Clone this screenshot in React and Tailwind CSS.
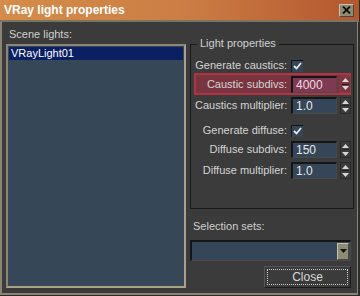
import React from "react";

const font = { fontFamily: '"Liberation Sans", Arial, sans-serif' };

function Spinner({ red }) {
  return (
    <div className={`ml-[3px] flex h-[17px] w-[11px] flex-col border ${red ? "border-[#8a3a44] bg-[#7a3440]" : "border-[#2a2a2a] bg-[#3b3b3b]"}`}>
      <div className="flex flex-1 items-center justify-center">
        <svg width="7" height="4" viewBox="0 0 7 4"><path d="M3.5 0 L7 4 L0 4 Z" fill="#d8d8d8" /></svg>
      </div>
      <div className="mx-[1px] h-px bg-[#222]" />
      <div className="flex flex-1 items-center justify-center">
        <svg width="7" height="4" viewBox="0 0 7 4"><path d="M0 0 L7 0 L3.5 4 Z" fill="#d8d8d8" /></svg>
      </div>
    </div>
  );
}

function NumRow({ label, value, red, mt, lw = "w-[96px]" }) {
  return (
    <div className={`flex h-[17px] items-center ${mt || ""}`}>
      <div className={`${lw} whitespace-nowrap pr-[4px] text-right text-[11px] leading-none text-[#d4d4d4]`}>{label}</div>
      <div className={`flex h-[17px] w-[46px] items-center border-t-2 border-l-2 border-b border-r border-t-[#151515] border-l-[#151515] border-b-[#4a4a4a] border-r-[#4a4a4a] pl-[3px] text-[12px] leading-none ${red ? "bg-[#7d3a52] text-[#f0d8e0]" : "bg-[#344658] text-[#e8e8e8]"}`}>
        {value}
      </div>
      <Spinner red={red} />
    </div>
  );
}

function CheckRow({ label, mt }) {
  return (
    <div className={`flex h-[13px] items-center ${mt || ""}`}>
      <div className="w-[96px] whitespace-nowrap pr-[4px] text-right text-[11px] leading-none text-[#d4d4d4]">{label}</div>
      <div className="flex h-[12px] w-[12px] items-center justify-center border-t border-l border-t-[#151515] border-l-[#151515] bg-[#344658]">
        <svg width="9" height="8" viewBox="0 0 9 8"><path d="M1 4 L3.5 6.5 L8 1" stroke="#e8e8e8" strokeWidth="1.8" fill="none" /></svg>
      </div>
    </div>
  );
}

export default function App() {
  return (
    <div className="h-[296px] w-[360px] overflow-hidden bg-[#2c2c2a]" style={font}>
      <div className="flex h-[295px] w-[358px] flex-col border-l-2 border-r border-b-2 border-l-[#8a8470] border-r-[#8a8470] border-b-[#8a8470] bg-[#3b3b3b]">
        {/* title bar */}
        <div className="-ml-[2px] flex h-[20px] w-[359px] items-center justify-between bg-gradient-to-r from-[#d48c48] via-[#cc7e45] to-[#b4572f] pl-[4px] pr-[5px]">
          <span className="text-[12px] font-bold leading-none text-white">VRay light properties</span>
          <div className="flex h-[13px] w-[15px] items-center justify-center border border-t-[#c8c0a8] border-l-[#c8c0a8] border-b-[#4a4638] border-r-[#4a4638] bg-[#8f8a72]">
            <svg width="9" height="8" viewBox="0 0 9 8"><path d="M1 0.5 L8 7.5 M8 0.5 L1 7.5" stroke="#111" strokeWidth="1.8" /></svg>
          </div>
        </div>
        <div className="-ml-[2px] h-[2px] w-[359px] bg-[#7a7562]" />
        <div className="flex flex-1 pl-[4px] pr-[3px]">
          {/* left column */}
          <div className="flex w-[180px] flex-col">
            <div className="mt-[7px] pl-[3px] text-[11px] leading-none text-[#d0d0d0]">Scene lights:</div>
            <div className="mt-[4px] h-[244px] w-[180px] border-2 border-t-[#8a8470] border-l-[#8a8470] border-b-[#aaa288] border-r-[#aaa288] bg-[#364858]">
              <div className="mx-[1px] mt-[1px] flex h-[13px] items-center bg-[#0a2062] pl-[2px] text-[11px] leading-none text-white">VRayLight01</div>
            </div>
          </div>
          {/* right column */}
          <div className="ml-[4px] flex flex-1 flex-col">
            <div className="relative mt-[22px] h-[165px] w-[164px] border border-[#1a1a1a]">
              <div className="absolute -top-[7px] left-[6px] bg-[#3b3b3b] px-[3px] text-[11px] leading-none text-[#d0d0d0]">Light properties</div>
              <div className="flex flex-col pl-[4px] pt-[14px]">
                <CheckRow label="Generate caustics:" />
                <div className="mt-[1px] -ml-[1px] flex h-[22px] w-[157px] items-center border-2 border-[#b03444] bg-[#7a3440]">
                  <NumRow label="Caustic subdivs:" value="4000" red lw="w-[95px]" />
                </div>
                <NumRow label="Caustics multiplier:" value="1.0" mt="mt-[2px]" />
                <CheckRow label="Generate diffuse:" mt="mt-[10px]" />
                <NumRow label="Diffuse subdivs:" value="150" mt="mt-[4px]" />
                <NumRow label="Diffuse multiplier:" value="1.0" mt="mt-[4px]" />
              </div>
            </div>
            <div className="mt-[12px] pl-[3px] text-[11px] leading-none text-[#d0d0d0]">Selection sets:</div>
            <div className="mt-[8px] flex h-[21px] w-[161px] items-center justify-end border-t-2 border-l-2 border-t-[#151515] border-l-[#151515] border-b border-r border-b-[#4a4a4a] border-r-[#4a4a4a] bg-[#344658] pr-[1px]">
              <div className="flex h-[17px] w-[12px] items-center justify-center border border-t-[#c8c0a8] border-l-[#c8c0a8] border-b-[#4a4638] border-r-[#4a4638] bg-[#8f8a72]">
                <svg width="7" height="4" viewBox="0 0 7 4"><path d="M0 0 L7 0 L3.5 4 Z" fill="#111" /></svg>
              </div>
            </div>
            <div className="mt-[5px] ml-[74px] flex h-[22px] w-[87px] items-center justify-center border border-t-[#555] border-l-[#555] border-b-[#1a1a1a] border-r-[#1a1a1a] p-[2px]">
              <div className="flex h-full w-full items-center justify-center border border-dotted border-[#d0d0d0] text-[12px] leading-none text-[#d8d8d8]">Close</div>
            </div>
          </div>
        </div>
      </div>
    </div>
  );
}
